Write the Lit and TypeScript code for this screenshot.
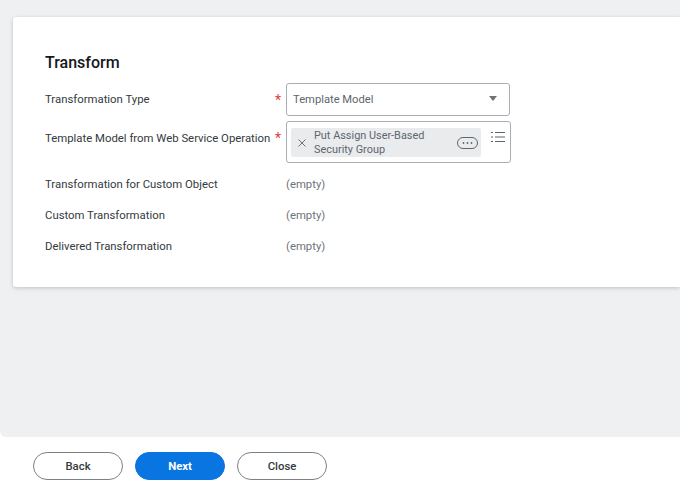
import { LitElement, html, css } from 'lit';
import { customElement } from 'lit/decorators.js';

@customElement('app-root')
export class AppRoot extends LitElement {
  static styles = css`
    :host {
      display: flex;
      flex-direction: column;
      width: 680px;
      height: 488px;
      overflow: hidden;
      background: #fff;
      font-family: Roboto, 'Liberation Sans', sans-serif;
      font-size: 11.35px;
      color: #333a40;
    }

    /* Grey working area, rounded at the bottom where it meets the footer */
    .page {
      height: 437px;
      box-sizing: border-box;
      padding: 17px 0 0 13px;
      background: #eef0f2;
      border-bottom-left-radius: 6px;
      overflow: hidden;
    }

    .card {
      height: 270px;
      box-sizing: border-box;
      padding: 36px 0 0 32px;
      background: #fff;
      border-radius: 3px 0 0 3px;
      box-shadow: 0 1px 4px rgba(0, 0, 0, 0.2);
    }

    h2 {
      margin: 0 0 11px;
      font-size: 16px;
      line-height: 19px;
      font-weight: 500;
      color: #14181c;
    }

    .row {
      display: grid;
      grid-template-columns: 241px 1fr;
      align-items: start;
    }

    .row.type {
      height: 33px;
      margin-bottom: 5px;
    }

    .row.model {
      height: 42px;
      margin-bottom: 5px;
    }

    .row.plain {
      height: 31px;
      align-items: center;
    }

    .label {
      position: relative;
      line-height: 16px;
    }

    .type .label {
      padding-top: 8px;
    }

    .model .label {
      padding-top: 9px;
    }

    .star {
      position: absolute;
      right: 5px;
      top: 9px;
      color: #de4040;
      font-size: 14px;
    }

    .empty {
      color: #6d747b;
    }

    .select,
    .multi {
      box-sizing: border-box;
      background: #fff;
      border: 1px solid #a9aeb3;
      border-radius: 3px;
    }

    .select {
      display: flex;
      align-items: center;
      justify-content: space-between;
      width: 224px;
      height: 33px;
      padding: 0 12px 0 6px;
      color: #5e666d;
      font-size: 11.2px;
    }

    .arrow {
      width: 0;
      height: 0;
      margin-bottom: 2px;
      border-left: 4px solid transparent;
      border-right: 4px solid transparent;
      border-top: 5px solid #6b7278;
    }

    .multi {
      display: flex;
      gap: 10px;
      width: 225px;
      height: 42px;
      padding: 6px 0 0 4px;
    }

    .pill {
      display: flex;
      align-items: center;
      width: 190px;
      height: 29px;
      padding: 0 3px 0 7px;
      box-sizing: border-box;
      background: #e9ebed;
      border-radius: 2px;
      color: #5e666d;
      font-size: 10.9px;
      line-height: 14px;
    }

    .pill-text {
      flex: 1;
      margin-left: 8px;
    }

    svg {
      display: block;
      flex: none;
    }

    .list {
      margin-top: 3px;
    }

    .footer {
      flex: 1;
      display: flex;
      align-items: flex-start;
      gap: 12px;
      padding: 15px 0 0 33px;
    }

    .btn {
      width: 90px;
      height: 28px;
      box-sizing: border-box;
      padding: 0;
      border: 1px solid #7b8187;
      border-radius: 14px;
      background: #fff;
      color: #333a40;
      font: 500 11.35px Roboto, 'Liberation Sans', sans-serif;
    }

    .btn.primary {
      border-color: #0875e1;
      background: #0875e1;
      color: #fff;
      font-weight: 700;
    }
  `;

  render() {
    return html`
      <div class="page">
        <div class="card">
          <h2>Transform</h2>
          <div class="row type">
            <div class="label">Transformation Type<span class="star">*</span></div>
            <div class="select">Template Model<span class="arrow"></span></div>
          </div>
          <div class="row model">
            <div class="label">Template Model from Web Service Operation<span class="star">*</span></div>
            <div class="multi">
              <div class="pill">
                <svg width="8" height="8" viewBox="0 0 8 8" fill="none" stroke="#6b7278" stroke-width="1">
                  <path d="M.5.5l7 7M7.5.5l-7 7" />
                </svg>
                <span class="pill-text">Put Assign User-Based<br />Security Group</span>
                <svg width="21" height="12" viewBox="0 0 21 12">
                  <rect x=".5" y=".5" width="20" height="11" rx="5.5" fill="none" stroke="#5e666d" />
                  <circle cx="6.5" cy="6" r=".9" fill="#5e666d" />
                  <circle cx="10.5" cy="6" r=".9" fill="#5e666d" />
                  <circle cx="14.5" cy="6" r=".9" fill="#5e666d" />
                </svg>
              </div>
              <svg class="list" width="14" height="12" viewBox="0 0 14 12" fill="none" stroke="#5e666d" stroke-width="1.2">
                <path d="M0 1.5h2M4 1.5h10M0 6h2M4 6h10M0 10.5h2M4 10.5h10" />
              </svg>
            </div>
          </div>
          <div class="row plain">
            <div class="label">Transformation for Custom Object</div>
            <div class="empty">(empty)</div>
          </div>
          <div class="row plain">
            <div class="label">Custom Transformation</div>
            <div class="empty">(empty)</div>
          </div>
          <div class="row plain">
            <div class="label">Delivered Transformation</div>
            <div class="empty">(empty)</div>
          </div>
        </div>
      </div>
      <div class="footer">
        <button class="btn">Back</button>
        <button class="btn primary">Next</button>
        <button class="btn">Close</button>
      </div>
    `;
  }
}
